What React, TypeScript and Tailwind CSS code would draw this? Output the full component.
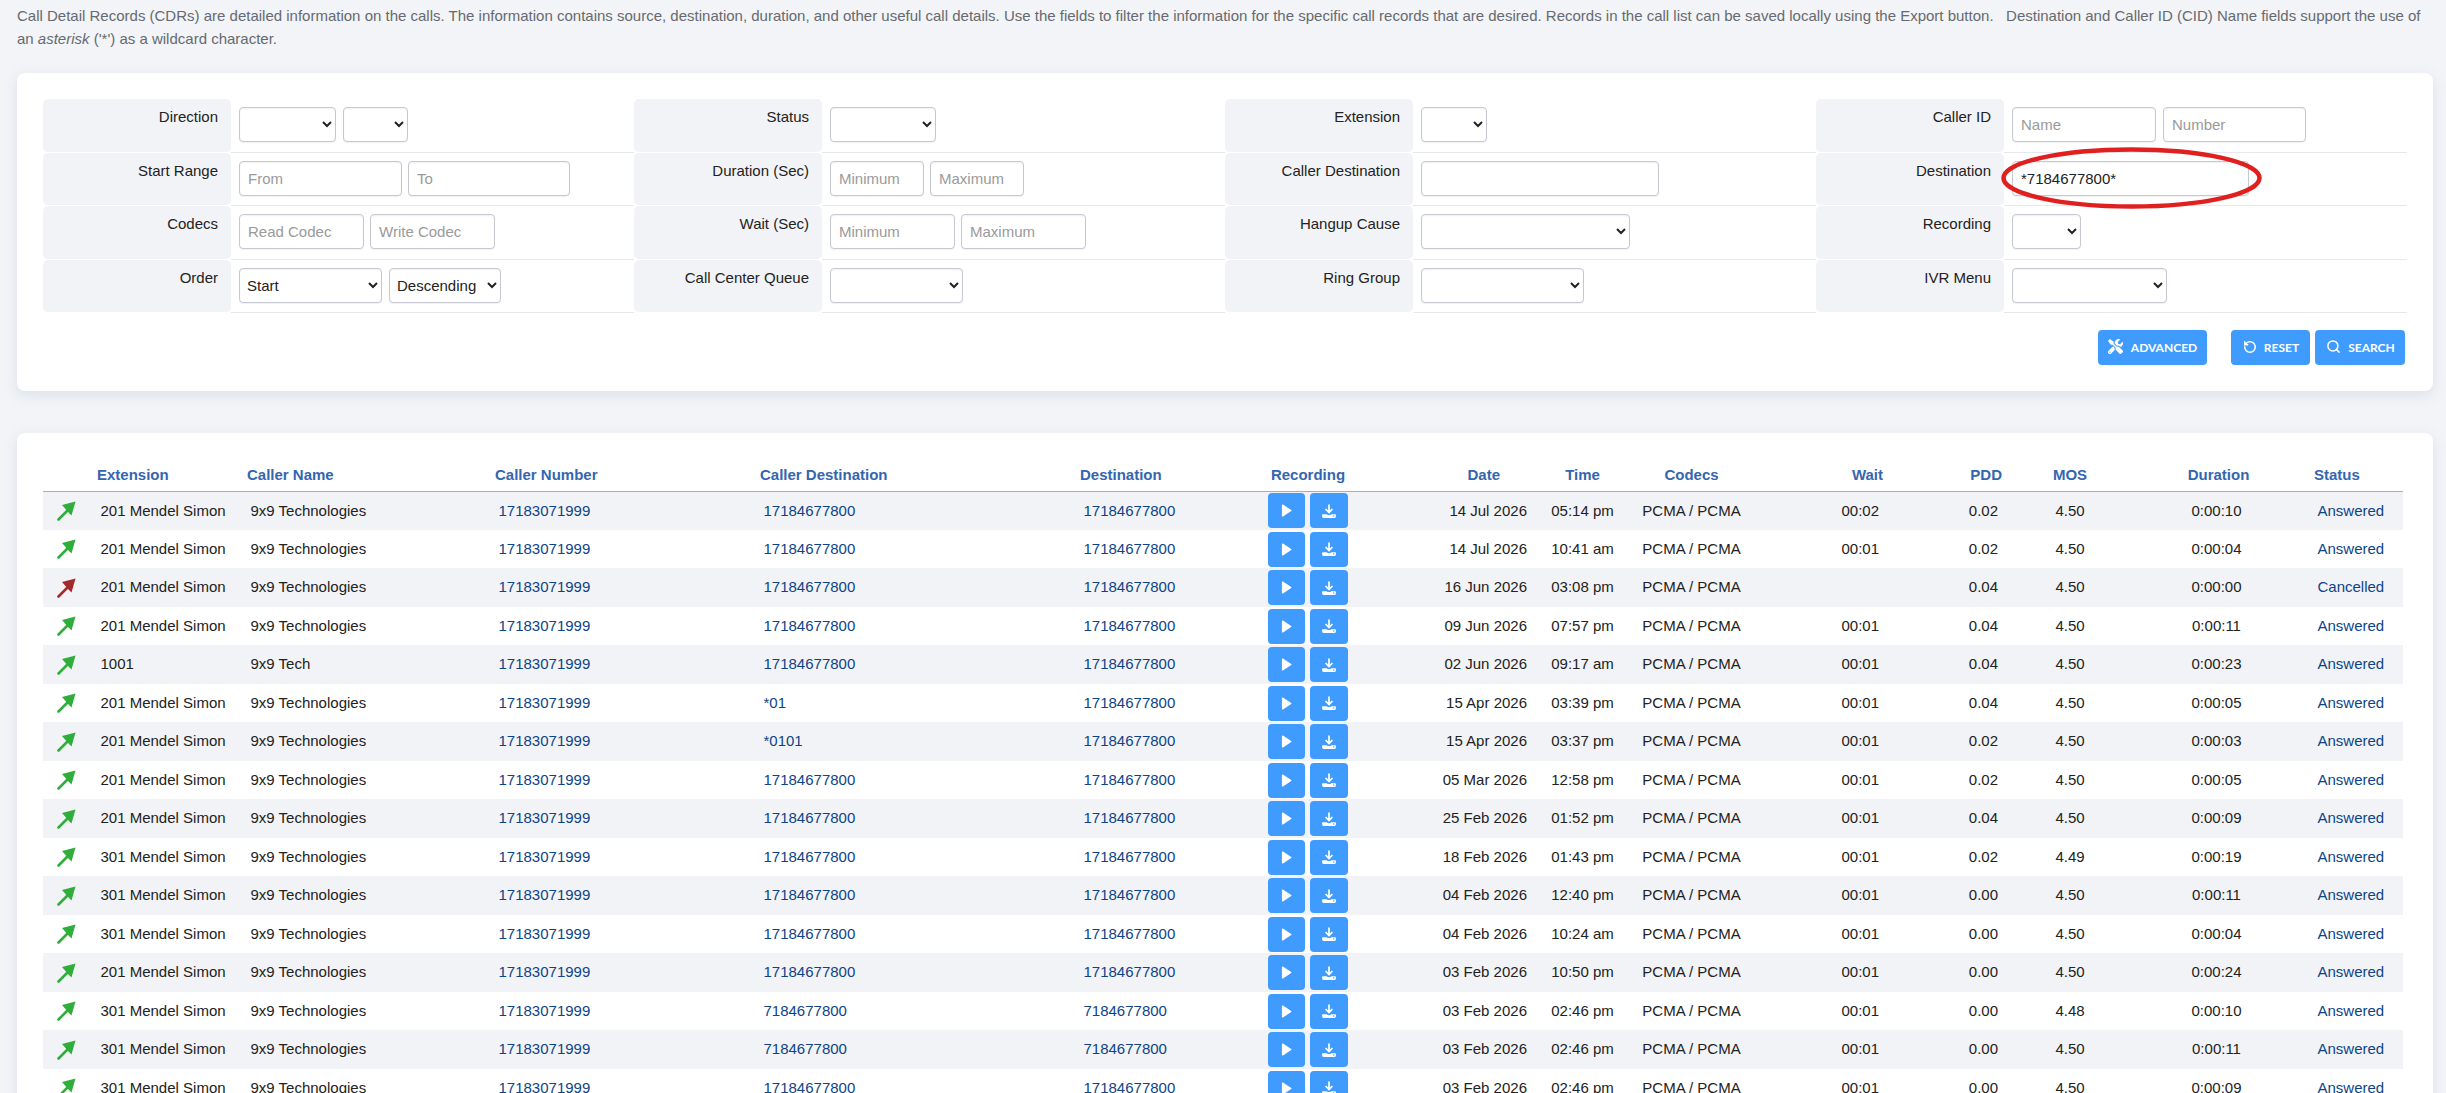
import { FaTools } from "react-icons/fa";
import { RotateCcw, Search } from "lucide-react";

const inputCls =
  "h-[35px] rounded-[4px] border border-[#c6c9d1] bg-white text-[15px] text-[#222] placeholder:text-[#9a9a9a] shadow-[inset_0_1px_2px_rgba(0,0,0,0.06),0_1px_1px_rgba(0,0,0,0.06)] outline-none";

function Sel({ w, value }: { w: string; value?: string }) {
  return (
    <select className={`${inputCls} pl-[3px] ${w}`} defaultValue={value ?? ""}>
      <option value={value ?? ""}>{value ?? ""}</option>
    </select>
  );
}

function Inp({ w, ph, value }: { w: string; ph?: string; value?: string }) {
  return <input className={`${inputCls} pl-2 ${w}`} placeholder={ph} defaultValue={value} />;
}

function Label({ children }: { children: string }) {
  return (
    <div className="h-[53.6px] rounded-[5px] border-b border-white bg-[#f2f3f7] pr-[13px] pt-[6px] text-right text-[15px] leading-[23px] text-[#222]">
      {children}
    </div>
  );
}

function Value({ children, gap = "gap-[6px]" }: { children: React.ReactNode; gap?: string }) {
  return (
    <div className={`flex h-[53.6px] border-b border-[#e6e8ee] pl-2 pt-2 ${gap}`}>{children}</div>
  );
}

function Btn({ icon, label, w }: { icon: React.ReactNode; label: string; w: string }) {
  return (
    <button className={`flex h-[35px] items-center justify-center gap-[8px] rounded-[4px] bg-[#409bff] font-['Lato',sans-serif] text-[12px] font-bold text-white ${w}`}>
      {icon}
      {label}
    </button>
  );
}

function CallArrow({ color }: { color: string }) {
  return (
    <svg width="19" height="20" viewBox="0 0 19 20" className="ml-[14px] block">
      <path d="M1.5 18.5 L11 9" stroke={color} strokeWidth="2.6" strokeLinecap="round" />
      <path d="M18.5 0.5 L5 4 L8.5 8 L10.5 10.5 L14.5 14.5 Z" fill={color} />
    </svg>
  );
}

function PlayIcon() {
  return (
    <svg width="11" height="13" viewBox="0 0 11 13">
      <path d="M1.6 1.2 L9.8 6.5 L1.6 11.8 Z" fill="white" stroke="white" strokeWidth="1.4" strokeLinejoin="round" />
    </svg>
  );
}

function DownloadIcon() {
  return (
    <svg width="14" height="14" viewBox="0 0 14 14">
      <path d="M7 0.5 V8 M3.6 5 L7 8.6 L10.4 5" fill="none" stroke="white" strokeWidth="1.7" />
      <path d="M1 10.2 H4.6 Q7 12 9.4 10.2 H13 Q14 10.2 14 11.5 Q14 14 12.5 14 H1.5 Q0 14 0 11.5 Q0 10.2 1 10.2 Z" fill="white" />
      <circle cx="11.8" cy="12" r="0.7" fill="#409bff" />
    </svg>
  );
}

const thCls = "px-1 text-[15px] font-bold text-[#3466b0]";
const linkCls = "px-[7.5px] text-[#0d4488]";

type Row = [string, string, string, string, string, string, string, string, string, string];

const rows: Row[] = [
  ["201 Mendel Simon", "17184677800", "17184677800", "14 Jul 2026", "05:14 pm", "00:02", "0.02", "4.50", "0:00:10", "Answered"],
  ["201 Mendel Simon", "17184677800", "17184677800", "14 Jul 2026", "10:41 am", "00:01", "0.02", "4.50", "0:00:04", "Answered"],
  ["201 Mendel Simon", "17184677800", "17184677800", "16 Jun 2026", "03:08 pm", "", "0.04", "4.50", "0:00:00", "Cancelled"],
  ["201 Mendel Simon", "17184677800", "17184677800", "09 Jun 2026", "07:57 pm", "00:01", "0.04", "4.50", "0:00:11", "Answered"],
  ["1001", "17184677800", "17184677800", "02 Jun 2026", "09:17 am", "00:01", "0.04", "4.50", "0:00:23", "Answered"],
  ["201 Mendel Simon", "*01", "17184677800", "15 Apr 2026", "03:39 pm", "00:01", "0.04", "4.50", "0:00:05", "Answered"],
  ["201 Mendel Simon", "*0101", "17184677800", "15 Apr 2026", "03:37 pm", "00:01", "0.02", "4.50", "0:00:03", "Answered"],
  ["201 Mendel Simon", "17184677800", "17184677800", "05 Mar 2026", "12:58 pm", "00:01", "0.02", "4.50", "0:00:05", "Answered"],
  ["201 Mendel Simon", "17184677800", "17184677800", "25 Feb 2026", "01:52 pm", "00:01", "0.04", "4.50", "0:00:09", "Answered"],
  ["301 Mendel Simon", "17184677800", "17184677800", "18 Feb 2026", "01:43 pm", "00:01", "0.02", "4.49", "0:00:19", "Answered"],
  ["301 Mendel Simon", "17184677800", "17184677800", "04 Feb 2026", "12:40 pm", "00:01", "0.00", "4.50", "0:00:11", "Answered"],
  ["301 Mendel Simon", "17184677800", "17184677800", "04 Feb 2026", "10:24 am", "00:01", "0.00", "4.50", "0:00:04", "Answered"],
  ["201 Mendel Simon", "17184677800", "17184677800", "03 Feb 2026", "10:50 pm", "00:01", "0.00", "4.50", "0:00:24", "Answered"],
  ["301 Mendel Simon", "7184677800", "7184677800", "03 Feb 2026", "02:46 pm", "00:01", "0.00", "4.48", "0:00:10", "Answered"],
  ["301 Mendel Simon", "7184677800", "7184677800", "03 Feb 2026", "02:46 pm", "00:01", "0.00", "4.50", "0:00:11", "Answered"],
  ["301 Mendel Simon", "17184677800", "17184677800", "03 Feb 2026", "02:46 pm", "00:01", "0.00", "4.50", "0:00:09", "Answered"],
];

export default function App() {
  return (
    <div className="h-screen overflow-hidden bg-[#f2f4f7] px-[17px] pt-[4px] font-['Liberation_Sans',sans-serif] text-[15px]">
      <p className="mb-[23px] w-[2412px] leading-[23px] text-[#666a70]">
        Call Detail Records (CDRs) are detailed information on the calls. The information contains source, destination, duration, and other useful call details. Use the fields to filter the information for the specific call records that are desired. Records in the call list can be saved locally using the Export button.&nbsp;&nbsp; Destination and Caller ID (CID) Name fields support the use of an <i>asterisk</i> ('*') as a wildcard character.
      </p>

      {/* filters */}
      <div className="relative w-[2416px] rounded-[8px] bg-white p-[26px] shadow-[0_4px_14px_rgba(120,140,175,0.18)]">
        <div className="grid grid-cols-[188px_403px_188px_403px_188px_403px_188px_403px]">
          <Label>Direction</Label>
          <Value gap="gap-[7px]">
            <Sel w="w-[97px]" />
            <Sel w="w-[65px]" />
          </Value>
          <Label>Status</Label>
          <Value>
            <Sel w="w-[106px]" />
          </Value>
          <Label>Extension</Label>
          <Value>
            <Sel w="w-[66px]" />
          </Value>
          <Label>Caller ID</Label>
          <Value gap="gap-[7px]">
            <Inp w="w-[144px]" ph="Name" />
            <Inp w="w-[143px]" ph="Number" />
          </Value>

          <Label>Start Range</Label>
          <Value>
            <Inp w="w-[163px]" ph="From" />
            <Inp w="w-[162px]" ph="To" />
          </Value>
          <Label>Duration (Sec)</Label>
          <Value>
            <Inp w="w-[94px]" ph="Minimum" />
            <Inp w="w-[94px]" ph="Maximum" />
          </Value>
          <Label>Caller Destination</Label>
          <Value>
            <Inp w="w-[238px]" />
          </Value>
          <Label>Destination</Label>
          <Value>
            <Inp w="w-[237px]" value="*7184677800*" />
          </Value>

          <Label>Codecs</Label>
          <Value>
            <Inp w="w-[125px]" ph="Read Codec" />
            <Inp w="w-[125px]" ph="Write Codec" />
          </Value>
          <Label>Wait (Sec)</Label>
          <Value>
            <Inp w="w-[125px]" ph="Minimum" />
            <Inp w="w-[125px]" ph="Maximum" />
          </Value>
          <Label>Hangup Cause</Label>
          <Value>
            <Sel w="w-[209px]" />
          </Value>
          <Label>Recording</Label>
          <Value>
            <Sel w="w-[69px]" />
          </Value>

          <Label>Order</Label>
          <Value gap="gap-[7px]">
            <Sel w="w-[143px]" value="Start" />
            <Sel w="w-[112px]" value="Descending" />
          </Value>
          <Label>Call Center Queue</Label>
          <Value>
            <Sel w="w-[133px]" />
          </Value>
          <Label>Ring Group</Label>
          <Value>
            <Sel w="w-[163px]" />
          </Value>
          <Label>IVR Menu</Label>
          <Value>
            <Sel w="w-[155px]" />
          </Value>
        </div>

        <div className="mt-[17px] flex justify-end pr-[2px]">
          <Btn w="w-[109px] mr-[24px]" icon={<FaTools size={15} className="-translate-y-px" />} label="ADVANCED" />
          <Btn w="w-[79px] mr-[5px]" icon={<RotateCcw size={14} strokeWidth={2.6} className="-translate-y-px translate-x-px" />} label="RESET" />
          <Btn w="w-[90px]" icon={<Search size={15} strokeWidth={2.4} className="-translate-y-px translate-x-px" />} label="SEARCH" />
        </div>

        {/* red marker drawn over the screenshot */}
        <svg width="261" height="62" viewBox="0 0 261 62" className="absolute left-[1984px] top-[74px]">
          <ellipse cx="130.5" cy="31" rx="128" ry="28.5" fill="none" stroke="#e01f1f" strokeWidth="4.5" />
        </svg>
      </div>

      {/* call list */}
      <div className="mt-[42px] w-[2416px] rounded-[8px] bg-white px-[26px] pt-[26px] shadow-[0_4px_14px_rgba(120,140,175,0.18)]">
        <table className="w-[2360px] table-fixed border-collapse whitespace-nowrap text-left text-[#222]">
          <colgroup>
            <col className="w-[50px]" />
            <col className="w-[150px]" />
            <col className="w-[248px]" />
            <col className="w-[265px]" />
            <col className="w-[320px]" />
            <col className="w-[174px]" />
            <col className="w-[116px]" />
            <col className="w-[169px]" />
            <col className="w-[95px]" />
            <col className="w-[123px]" />
            <col className="w-[134px]" />
            <col className="w-[119px]" />
            <col className="w-[128px]" />
            <col className="w-[176px]" />
            <col className="w-[93px]" />
          </colgroup>
          <thead>
            <tr className="h-[32px] border-b border-[#9fb0cf]">
              <th />
              <th className={thCls}>Extension</th>
              <th className={thCls}>Caller Name</th>
              <th className={thCls}>Caller Number</th>
              <th className={thCls}>Caller Destination</th>
              <th className={thCls}>Destination</th>
              <th className={`${thCls} text-center`}>Recording</th>
              <th className={`${thCls} pr-[35px] text-right`}>Date</th>
              <th className={`${thCls} text-center`}>Time</th>
              <th className={`${thCls} text-center`}>Codecs</th>
              <th className={`${thCls} text-right`}>Wait</th>
              <th className={`${thCls} text-right`}>PDD</th>
              <th className={`${thCls} text-center`}>MOS</th>
              <th className={`${thCls} pr-[11px] text-center`}>Duration</th>
              <th className={thCls}>Status</th>
            </tr>
          </thead>
          <tbody>
            {rows.map((r, i) => (
              <tr key={i} className={`h-[38.5px] ${i % 2 === 0 ? "bg-[#f2f3f6]" : "bg-white"}`}>
                <td>
                  <CallArrow color={r[9] === "Cancelled" ? "#a52a2a" : "#30ae3c"} />
                </td>
                <td className="px-[7.5px]">{r[0]}</td>
                <td className="px-[7.5px]">{r[0] === "1001" ? "9x9 Tech" : "9x9 Technologies"}</td>
                <td className={linkCls}>17183071999</td>
                <td className={linkCls}>{r[1]}</td>
                <td className={linkCls}>{r[2]}</td>
                <td>
                  <div className="flex justify-center gap-[5px]">
                    <button className="flex h-[35px] w-[37px] items-center justify-center rounded-[4px] bg-[#409bff]">
                      <PlayIcon />
                    </button>
                    <button className="flex h-[35px] w-[38px] items-center justify-center rounded-[4px] bg-[#409bff]">
                      <DownloadIcon />
                    </button>
                  </div>
                </td>
                <td className="px-2 text-right">{r[3]}</td>
                <td className="text-center">{r[4]}</td>
                <td className="text-center">PCMA / PCMA</td>
                <td className="px-2 text-right">{r[5]}</td>
                <td className="px-2 text-right">{r[6]}</td>
                <td className="text-center">{r[7]}</td>
                <td className="pr-[11px] text-center">{r[8]}</td>
                <td className={linkCls}>{r[9]}</td>
              </tr>
            ))}
          </tbody>
        </table>
      </div>
    </div>
  );
}
